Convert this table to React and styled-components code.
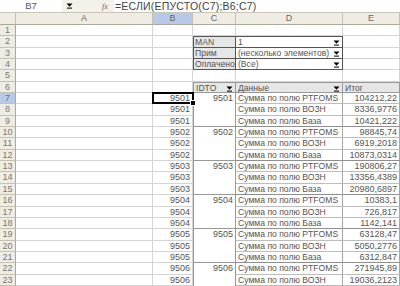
import React from 'react';
import styled, { createGlobalStyle, css } from 'styled-components';

const GlobalStyle = createGlobalStyle`
  html, body { margin: 0; padding: 0; background: #fff; }
  body { font-family: "Liberation Sans", Arial, sans-serif; overflow: hidden; }
`;

const ROW_H = 11.35;
const COLS = '16px 137px 40px 43px 107px 57px';

const groups = [
  { id: '9501', v: ['104212,22', '8336,9776', '10421,222'] },
  { id: '9502', v: ['98845,74', '6919,2018', '10873,0314'] },
  { id: '9503', v: ['190806,27', '13356,4389', '20980,6897'] },
  { id: '9504', v: ['10383,1', '726,817', '1142,141'] },
  { id: '9505', v: ['63128,47', '5050,2776', '6312,847'] },
  { id: '9506', v: ['271945,89', '19036,2123', '27194,589'] },
];
const fields = ['Сумма по полю PTFOMS', 'Сумма по полю ВОЗН', 'Сумма по полю База'];

const filters = [
  { label: 'MAN', value: '1' },
  { label: 'Прим', value: '(несколько элементов)' },
  { label: 'Оплачено', value: '(Все)' },
];

const Screen = styled.div`
  width: 400px;
  height: 286px;
  overflow: hidden;
  font-size: 9px;
  color: #555;
`;

const FormulaBar = styled.div`
  display: flex;
  align-items: center;
  height: 13px;
  background: #f3f1ea;
  border-bottom: 1px solid #c9c6b8;
  box-sizing: border-box;
`;

const NameBox = styled.div`
  width: 62px;
  height: 12px;
  background: #fff;
  text-align: center;
  line-height: 12px;
  font-size: 9.5px;
  color: #555;
`;

const NameArrow = styled.div`
  width: 14px;
  display: flex;
  justify-content: center;
  align-items: center;
`;

const Fx = styled.div`
  margin-left: 26px;
  width: 12px;
  font-family: "Liberation Serif", serif;
  font-style: italic;
  font-size: 8px;
  color: #666;
`;

const FormulaInput = styled.div`
  flex: 1;
  height: 12px;
  background: #fff;
  line-height: 12px;
  padding-left: 1px;
  font-size: 10.5px;
  letter-spacing: 0.2px;
  color: #444;
`;

const Grid = styled.div`
  display: grid;
  grid-template-columns: ${COLS};
  grid-auto-rows: ${ROW_H}px;
  grid-template-rows: 12px;
  position: relative;
`;

const ColHead = styled.div`
  background: ${(p) => (p.$active ? '#b7c9e9' : '#efede3')};
  border-right: 1px solid #c5c2b2;
  border-bottom: 1px solid #aca899;
  box-sizing: border-box;
  text-align: center;
  line-height: 11px;
  color: #666;
  font-size: 9px;
`;

const RowHead = styled.div`
  background: ${(p) => (p.$active ? '#b7c9e9' : '#efede3')};
  border-right: 1px solid #aca899;
  border-bottom: 1px solid #c5c2b2;
  box-sizing: border-box;
  text-align: center;
  line-height: ${ROW_H - 1}px;
  color: #777;
  font-size: 9px;
`;

const Cell = styled.div`
  position: relative;
  box-sizing: border-box;
  border-right: 1px solid #d4d4d4;
  border-bottom: 1px solid #d4d4d4;
  line-height: ${ROW_H - 1}px;
  padding: 0 2px;
  white-space: nowrap;
  overflow: visible;
  font-size: ${(p) => (p.$num ? '9px' : '8.6px')};
  text-align: ${(p) => (p.$num ? 'right' : 'left')};
  ${(p) =>
    p.$pivotHead &&
    css`
      background: #e6e6e6;
      border: 1px solid #555;
      border-top: none;
      padding: 0 1px;
      ${p.$first && 'border-top: 1px solid #555;'}
    `}
  ${(p) =>
    p.$pivotValue &&
    css`
      background: #fff;
      border-right: 1px solid #555;
      border-bottom: 1px solid #555;
      ${p.$first && 'border-top: 1px solid #555;'}
    `}
  ${(p) =>
    p.$field &&
    css`
      background: #e6e6e6;
      border-top: 1px solid #999;
      border-right: 1px solid #999;
      border-bottom: 1px solid #999;
      ${p.$left && 'border-left: 1px solid #999;'}
    `}
  ${(p) =>
    p.$rowLabel &&
    css`
      border-left: 1px solid #999;
      border-right: 1px solid #999;
      border-bottom: ${p.$last ? '1px solid #999' : 'none'};
    `}
  ${(p) =>
    p.$data &&
    css`
      border-right: 1px solid #a8a8a8;
      border-bottom: 1px solid ${p.$last ? '#8f8f8f' : '#bdbdbd'};
    `}
`;

const DropArrow = styled.span`
  position: absolute;
  right: 2px;
  top: 3px;
  display: flex;
`;

const Selection = styled.div`
  position: absolute;
  box-sizing: border-box;
  border: 2px solid #000;
  pointer-events: none;
`;

const FillHandle = styled.div`
  position: absolute;
  right: -4px;
  bottom: -4px;
  width: 4px;
  height: 4px;
  background: #000;
  border: 1px solid #fff;
`;

const Arrow = ({ w = 7 }) => (
  <svg width={w} height="6" viewBox="0 0 7 6">
    <path d="M0.5 0.5h6L3.5 3.8z" fill="#000" />
    <rect x="1" y="4.6" width="5" height="1" fill="#000" />
  </svg>
);

const buildRows = () => {
  const rows = [];
  for (let r = 1; r <= 23; r++) {
    const cells = { b: null, c: null, d: null, e: null };
    if (r >= 2 && r <= 4) {
      const f = filters[r - 2];
      cells.c = (
        <Cell key="c" $pivotHead $first={r === 2}>
          {f.label}
        </Cell>
      );
      cells.d = (
        <Cell key="d" $pivotValue $first={r === 2}>
          {f.value}
          <DropArrow>
            <Arrow />
          </DropArrow>
        </Cell>
      );
    } else if (r === 6) {
      cells.c = (
        <Cell key="c" $field $left>
          IDTO
          <DropArrow>
            <Arrow />
          </DropArrow>
        </Cell>
      );
      cells.d = (
        <Cell key="d" $field>
          Данные
          <DropArrow>
            <Arrow />
          </DropArrow>
        </Cell>
      );
      cells.e = (
        <Cell key="e" $field>
          Итог
        </Cell>
      );
    } else if (r >= 7) {
      const i = r - 7;
      const g = groups[Math.floor(i / 3)];
      const k = i % 3;
      cells.b = (
        <Cell key="b" $num>
          {g.id}
        </Cell>
      );
      cells.c = (
        <Cell key="c" $num $rowLabel $last={k === 2}>
          {k === 0 ? g.id : ''}
        </Cell>
      );
      cells.d = (
        <Cell key="d" $data $last={k === 2}>
          {fields[k]}
        </Cell>
      );
      cells.e = (
        <Cell key="e" $num $data $last={k === 2}>
          {g.v[k]}
        </Cell>
      );
    }
    rows.push(
      <React.Fragment key={r}>
        <RowHead $active={r === 7}>{r}</RowHead>
        <Cell />
        {cells.b || <Cell key="b" />}
        {cells.c || <Cell key="c" />}
        {cells.d || <Cell key="d" />}
        {cells.e || <Cell key="e" />}
      </React.Fragment>
    );
  }
  return rows;
};

export default function App() {
  return (
    <>
      <GlobalStyle />
      <Screen>
        <FormulaBar>
          <NameBox>B7</NameBox>
          <NameArrow>
            <Arrow />
          </NameArrow>
          <Fx>fx</Fx>
          <FormulaInput>=ЕСЛИ(ЕПУСТО(C7);B6;C7)</FormulaInput>
        </FormulaBar>
        <Grid>
          <ColHead />
          <ColHead>A</ColHead>
          <ColHead $active>B</ColHead>
          <ColHead>C</ColHead>
          <ColHead>D</ColHead>
          <ColHead>E</ColHead>
          {buildRows()}
          <Selection
            style={{
              left: 152,
              top: 12 + 6 * ROW_H - 1,
              width: 42,
              height: ROW_H + 1,
            }}
          >
            <FillHandle />
          </Selection>
        </Grid>
      </Screen>
    </>
  );
}
